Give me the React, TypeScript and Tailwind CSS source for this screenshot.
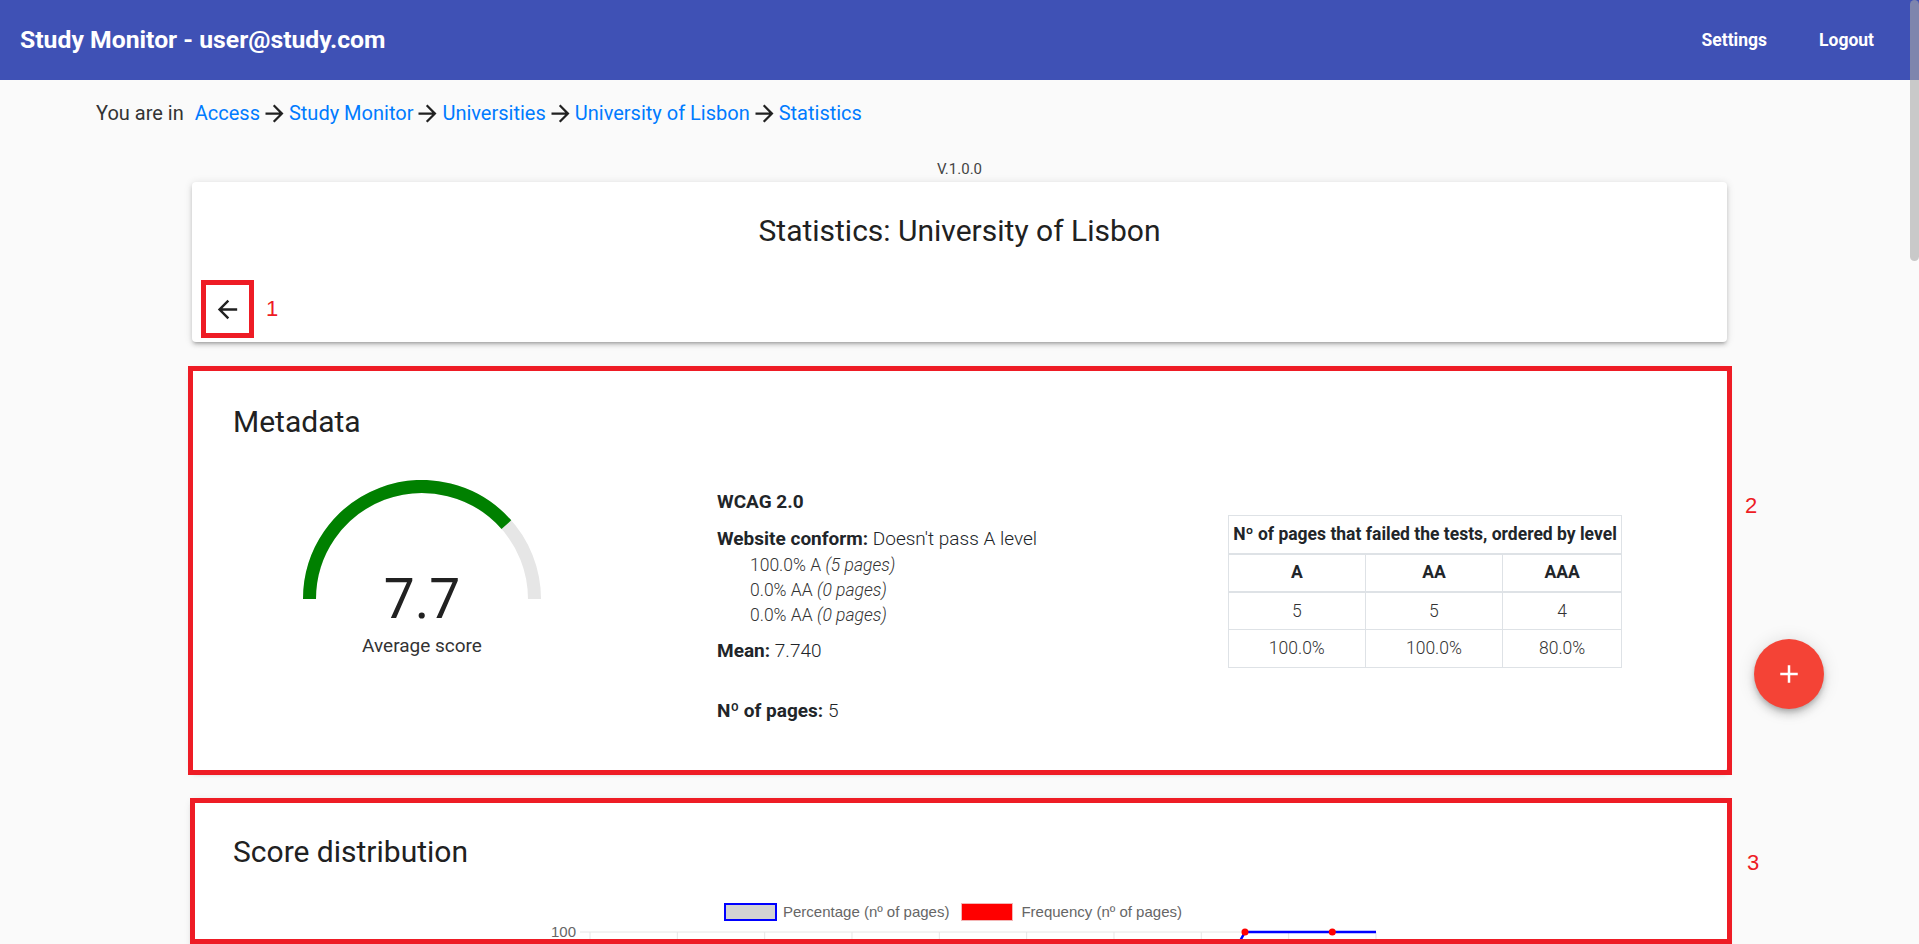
import React from "react";

const RED = "border-[#ee1c25]";

function ArrowForward() {
  return (
    <svg viewBox="0 0 24 24" className="w-[27px] h-[27px] mx-[1px] shrink-0" fill="#212121">
      <path d="M12 4l-1.41 1.41L16.17 11H4v2h12.17l-5.58 5.59L12 20l8-8z" />
    </svg>
  );
}

function Gauge({ value }: { value: number }) {
  const cx = 120;
  const cy = 119;
  const r = 112.5;
  const frac = value / 10;
  const theta = Math.PI - frac * Math.PI;
  const ex = cx + r * Math.cos(theta);
  const ey = cy - r * Math.sin(theta);
  return (
    <svg width="240" height="120" viewBox="0 0 240 120" className="block">
      <path d={`M ${cx - r} ${cy} A ${r} ${r} 0 0 1 ${cx + r} ${cy}`} fill="none" stroke="#e6e6e6" strokeWidth="13" />
      <path d={`M ${cx - r} ${cy} A ${r} ${r} 0 0 1 ${ex} ${ey}`} fill="none" stroke="#008000" strokeWidth="13" />
    </svg>
  );
}

function Chart() {
  const top = 11;
  const h = 400;
  const left = 50;
  const cw = 87.33;
  const n = 9;
  const right = left + cw * n;
  const values = [0, 0, 0, 0, 0, 20, 60, 100, 100, 100];
  const labels = ["[1 - 2[", "[2 - 3[", "[3 - 4[", "[4 - 5[", "[5 - 6[", "[6 - 7[", "[7 - 8[", "[8 - 9[", "[9 - 10]"];
  const freq = [0, 0, 0, 0, 0, 1, 2, 2, 0];
  const pts = values.map((v, k) => [left + cw / 2 + cw * k, top + h - (v / 100) * h]);
  const yTicks = [100, 80, 60, 40, 20, 0];
  return (
    <svg width="900" height="470" viewBox="0 0 900 470" className="block" style={{ fontFamily: "'Liberation Sans', Arial, sans-serif" }}>
      <defs>
        <clipPath id="area">
          <rect x={left} y={top - 6} width={right - left} height={h + 12} />
        </clipPath>
      </defs>
      {yTicks.map((t) => {
        const y = top + h - (t / 100) * h;
        return (
          <g key={t}>
            <line x1={left - 10} y1={y} x2={right} y2={y} stroke="#e6e6e6" strokeWidth="1" />
            <text x={left - 14} y={y + 5} textAnchor="end" fontSize="15" fill="#666">
              {t}
            </text>
          </g>
        );
      })}
      {Array.from({ length: n + 1 }).map((_, k) => (
        <line key={k} x1={left + cw * k} y1={top} x2={left + cw * k} y2={top + h + 10} stroke="#e6e6e6" strokeWidth="1" />
      ))}
      {labels.map((l, k) => (
        <text key={l} x={left + cw / 2 + cw * k} y={top + h + 30} textAnchor="middle" fontSize="15" fill="#666">
          {l}
        </text>
      ))}
      <g clipPath="url(#area)">
        {freq.map((f, k) =>
          f > 0 ? (
            <rect key={k} x={left + cw * k + 10} y={top + h - f * 40} width={cw - 20} height={f * 40} fill="#ff0000" />
          ) : null
        )}
        <polyline points={pts.map((p) => p.join(",")).join(" ")} fill="none" stroke="#0000ff" strokeWidth="2.5" />
        {pts.map((p, k) => (
          <circle key={k} cx={p[0]} cy={p[1]} r="3.5" fill="#ff0000" />
        ))}
      </g>
    </svg>
  );
}

const CARD =
  "bg-white rounded-[4px] shadow-[0_3px_3px_-2px_rgba(0,0,0,0.2),0_3px_4px_0_rgba(0,0,0,0.14),0_1px_8px_0_rgba(0,0,0,0.12)]";

export default function App() {
  return (
    <div className="h-screen overflow-y-auto [scrollbar-width:none] [&::-webkit-scrollbar]:hidden bg-[#fafafa] font-[Roboto,sans-serif] text-[#212529]">
      <header className="h-[80px] bg-[#3f51b5] flex items-center justify-between pl-[20px] pr-[45px] text-white">
        <div className="text-[24.75px] font-bold leading-none">Study Monitor - user@study.com</div>
        <nav className="flex items-center gap-[52px] text-[17.5px] font-bold">
          <span>Settings</span>
          <span>Logout</span>
        </nav>
      </header>

      <div className="mt-[21px] ml-[96px] flex items-center h-[25px] text-[20px] leading-[25px] text-[#333]">
        <span className="mr-[11px]">You are in</span>
        <span className="text-[#007bff]">Access</span>
        <ArrowForward />
        <span className="text-[#007bff]">Study Monitor</span>
        <ArrowForward />
        <span className="text-[#007bff]">Universities</span>
        <ArrowForward />
        <span className="text-[#007bff]">University of Lisbon</span>
        <ArrowForward />
        <span className="text-[#007bff]">Statistics</span>
      </div>

      <div className="mt-[33px] text-center text-[15px] leading-[20px] text-[#444]">V.1.0.0</div>

      <main className="mx-[192px] pb-[2400px]">
        <section className={`mt-[3px] ${CARD} pt-[31px] pl-[9px] pb-[4px]`}>
          <h1 className="text-center text-[30px] leading-[36px] text-[#212121] pr-[9px]">Statistics: University of Lisbon</h1>
          <div className="mt-[31px] flex items-center">
            <button className={`w-[53px] h-[58px] border-[5px] ${RED} flex items-center justify-center bg-transparent`}>
              <svg viewBox="0 0 24 24" className="w-[29px] h-[29px]" fill="#212121">
                <path d="M20 11H7.83l5.59-5.59L12 4l-8 8 8 8 1.41-1.41L7.83 13H20v-2z" />
              </svg>
            </button>
            <span className="ml-[12px] text-[22px] leading-[22px] text-[#ee1c25] font-['Liberation_Sans',sans-serif]">1</span>
          </div>
        </section>

        <section className={`relative mt-[28px] h-[401px] ${CARD} pt-[34px] pl-[41px]`}>
          <h2 className="text-[30px] leading-[36px] text-[#212121]">Metadata</h2>
          <div className="flex items-start">
            <div className="w-[378px] mt-[40px] flex flex-col items-center">
              <Gauge value={7.7} />
              <div className="-mt-[29px] text-[55px] leading-[56px] text-[#212121]">7.7</div>
              <div className="mt-[6px] text-[19px] leading-[25px] text-[#333]">Average score</div>
            </div>
            <div className="ml-[106px] w-[511px] mt-[47px]">
              <p className="text-[19px] leading-[30px] font-bold">WCAG 2.0</p>
              <p className="mt-[7px] text-[19px] leading-[30px]">
                <b className="font-bold">Website conform:</b> <span className="font-light">Doesn't pass A level</span>
              </p>
              <div className="ml-[33px] -mt-[1px] text-[17.5px] leading-[25px] font-light text-[#333]">
                <div>
                  100.0% A <i>(5 pages)</i>
                </div>
                <div>
                  0.0% AA <i>(0 pages)</i>
                </div>
                <div>
                  0.0% AA <i>(0 pages)</i>
                </div>
              </div>
              <p className="mt-[8px] text-[19px] leading-[30px]">
                <b className="font-bold">Mean:</b> <span className="font-light">7.740</span>
              </p>
              <p className="mt-[30px] text-[19px] leading-[30px]">
                <b className="font-bold">Nº of pages:</b> <span className="font-light">5</span>
              </p>
            </div>
            <table className="mt-[75px] w-[394px] border-collapse text-[17.5px] text-center">
              <thead>
                <tr>
                  <th colSpan={3} className="h-[38px] border border-b-2 border-[#dee2e6] font-bold px-0">
                    Nº of pages that failed the tests, ordered by level
                  </th>
                </tr>
                <tr>
                  <th className="w-[137px] h-[38px] border border-b-2 border-[#dee2e6] font-bold">A</th>
                  <th className="w-[138px] h-[38px] border border-b-2 border-[#dee2e6] font-bold">AA</th>
                  <th className="w-[119px] h-[38px] border border-b-2 border-[#dee2e6] font-bold">AAA</th>
                </tr>
              </thead>
              <tbody className="font-light text-[#333]">
                <tr>
                  <td className="h-[38px] border border-[#dee2e6]">5</td>
                  <td className="h-[38px] border border-[#dee2e6]">5</td>
                  <td className="h-[38px] border border-[#dee2e6]">4</td>
                </tr>
                <tr>
                  <td className="h-[38px] border border-[#dee2e6]">100.0%</td>
                  <td className="h-[38px] border border-[#dee2e6]">100.0%</td>
                  <td className="h-[38px] border border-[#dee2e6]">80.0%</td>
                </tr>
              </tbody>
            </table>
          </div>
          <div className={`absolute -left-[4px] -right-[5px] -top-[4px] -bottom-[4px] border-[5px] ${RED} pointer-events-none`} />
          <span className="absolute left-full ml-[18px] top-[125px] text-[22px] leading-[22px] text-[#ee1c25] font-['Liberation_Sans',sans-serif]">
            2
          </span>
        </section>

        <section className={`relative mt-[29px] ${CARD} pt-[34px] pl-[41px] pb-[40px]`}>
          <h2 className="text-[30px] leading-[36px] text-[#212121]">Score distribution</h2>
          <div className="mt-[33px] ml-[491px] flex items-center h-[18px] font-['Liberation_Sans',Arial,sans-serif] text-[15px] text-[#666]">
            <span className="w-[53px] h-[18px] bg-[#d3d3d3] border-2 border-[#0000ff]" />
            <span className="ml-[6px]">Percentage (nº of pages)</span>
            <span className="ml-[12px] w-[52px] h-[18px] bg-[#ff0000] border border-[#f3b6b6]" />
            <span className="ml-[8px]">Frequency (nº of pages)</span>
          </div>
          <div className="ml-[307px]">
            <Chart />
          </div>
          <div className={`absolute -left-[2px] -right-[5px] -top-[2px] h-[146px] border-[5px] ${RED} pointer-events-none`} />
          <span className="absolute left-full ml-[20px] top-[52px] text-[22px] leading-[22px] text-[#ee1c25] font-['Liberation_Sans',sans-serif]">
            3
          </span>
        </section>
      </main>

      <button className="fixed left-[1754px] top-[639px] w-[70px] h-[70px] rounded-full bg-[#f44336] flex items-center justify-center shadow-[0_3px_5px_-1px_rgba(0,0,0,0.2),0_6px_10px_0_rgba(0,0,0,0.14),0_1px_18px_0_rgba(0,0,0,0.12)]">
        <svg viewBox="0 0 24 24" className="w-[30px] h-[30px]" fill="#ffffff">
          <path d="M19 13h-6v6h-2v-6H5v-2h6V5h2v6h6v2z" />
        </svg>
      </button>

      <div className="fixed right-0 top-0 w-[9px] h-[261px] rounded-full bg-[rgba(168,168,168,0.6)] pointer-events-none" />
    </div>
  );
}
